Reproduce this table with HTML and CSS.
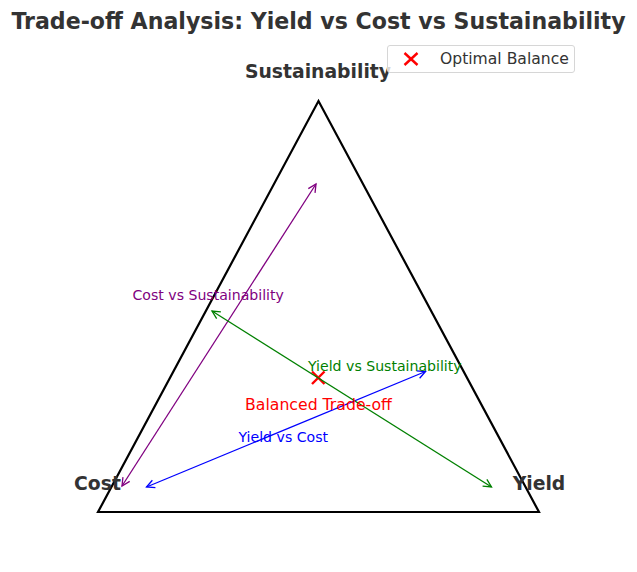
FILE: index.html
```html
<!DOCTYPE html>
<html lang="en">
<head>
<meta charset="utf-8">
<title>Trade-off Analysis</title>
<link rel="stylesheet" href="styles.css">
</head>
<body>
<div class="figure">
  <h1 class="title">Trade-off Analysis: Yield vs Cost vs Sustainability</h1>
  <svg class="chart" width="637" height="530" viewBox="0 42 637 530" xmlns="http://www.w3.org/2000/svg">
    <defs>
      <marker id="ah-purple" markerUnits="userSpaceOnUse" markerWidth="12" markerHeight="12" refX="9" refY="5" orient="auto-start-reverse" viewBox="0 0 12 10">
        <path class="head head-purple" d="M1,1 L9,5 L1,9"/>
      </marker>
      <marker id="ah-green" markerUnits="userSpaceOnUse" markerWidth="12" markerHeight="12" refX="9" refY="5" orient="auto-start-reverse" viewBox="0 0 12 10">
        <path class="head head-green" d="M1,1 L9,5 L1,9"/>
      </marker>
      <marker id="ah-blue" markerUnits="userSpaceOnUse" markerWidth="12" markerHeight="12" refX="9" refY="5" orient="auto-start-reverse" viewBox="0 0 12 10">
        <path class="head head-blue" d="M1,1 L9,5 L1,9"/>
      </marker>
    </defs>

    <polygon class="triangle" points="98,512 539,512 318.5,101"/>

    <line class="arrow arrow-purple" x1="122" y1="486" x2="316" y2="184" marker-start="url(#ah-purple)" marker-end="url(#ah-purple)"/>
    <line class="arrow arrow-blue" x1="146.5" y1="487" x2="425.5" y2="371.5" marker-start="url(#ah-blue)" marker-end="url(#ah-blue)"/>

    <g class="marker-x">
      <line x1="312" y1="371.5" x2="324.5" y2="384"/>
      <line x1="312" y1="384" x2="324.5" y2="371.5"/>
    </g>

    <line class="arrow arrow-green" x1="212" y1="311" x2="491.5" y2="487" marker-start="url(#ah-green)" marker-end="url(#ah-green)"/>

    <text class="vertex" x="318" y="77.5" text-anchor="middle">Sustainability</text>
    <text class="vertex" x="97.5" y="489.5" text-anchor="middle">Cost</text>
    <text class="vertex" x="539" y="489.5" text-anchor="middle">Yield</text>

    <text class="pair pair-purple" x="132.5" y="300">Cost vs Sustainability</text>
    <text class="pair pair-green" x="308" y="371">Yield vs Sustainability</text>
    <text class="pair pair-blue" x="238.5" y="442">Yield vs Cost</text>
    <text class="balanced" x="318.5" y="409.5" text-anchor="middle">Balanced Trade-off</text>
  </svg>

  <div class="legend">
    <svg class="legend-icon" width="16" height="14" viewBox="0 0 16 14" xmlns="http://www.w3.org/2000/svg">
      <line x1="1.5" y1="1" x2="14.5" y2="13"/>
      <line x1="1.5" y1="13" x2="14.5" y2="1"/>
    </svg>
    <span class="legend-label">Optimal Balance</span>
  </div>
</div>
</body>
</html>
```

FILE: styles.css
```css
html, body {
  margin: 0;
  padding: 0;
  background: #ffffff;
}

.figure {
  position: relative;
  width: 637px;
  height: 572px;
  overflow: hidden;
  font-family: "DejaVu Sans", "Liberation Sans", sans-serif;
  color: #333333;
}

.title {
  margin: 0;
  height: 42px;
  line-height: 42px;
  font-size: 22.1px;
  font-weight: bold;
  text-align: center;
  color: #333333;
  white-space: nowrap;
}

.chart {
  display: block;
}

.triangle {
  fill: none;
  stroke: #000000;
  stroke-width: 2.2;
  stroke-linejoin: miter;
}

.arrow {
  stroke-width: 1.3;
  fill: none;
}

.arrow-purple { stroke: #800080; }
.arrow-green { stroke: #008000; }
.arrow-blue { stroke: #0000ff; }

.head {
  fill: none;
  stroke-width: 1.3;
  stroke-linejoin: miter;
}

.head-purple { stroke: #800080; }
.head-green { stroke: #008000; }
.head-blue { stroke: #0000ff; }

.marker-x line {
  stroke: #ff0000;
  stroke-width: 2.4;
}

.vertex {
  font-family: "DejaVu Sans", sans-serif;
  font-size: 18.8px;
  font-weight: bold;
  fill: #333333;
}

.pair {
  font-family: "DejaVu Sans", sans-serif;
  font-size: 14.1px;
}

.pair-purple { fill: #800080; }
.pair-green { fill: #008000; }
.pair-blue { fill: #0000ff; }

.balanced {
  font-family: "DejaVu Sans", sans-serif;
  font-size: 15.7px;
  fill: #ff0000;
}

.legend {
  position: absolute;
  left: 387px;
  top: 45px;
  width: 186px;
  height: 26px;
  box-sizing: content-box;
  border: 1px solid #d6d6d6;
  border-radius: 3px;
  background: rgba(255, 255, 255, 0.8);
  display: flex;
  align-items: center;
  padding: 0;
}

.legend-icon {
  display: block;
  margin-left: 15px;
  flex: none;
}

.legend-icon line {
  stroke: #ff0000;
  stroke-width: 2.4;
}

.legend-label {
  margin-left: 21px;
  font-size: 15.6px;
  color: #333333;
  white-space: nowrap;
}
```
